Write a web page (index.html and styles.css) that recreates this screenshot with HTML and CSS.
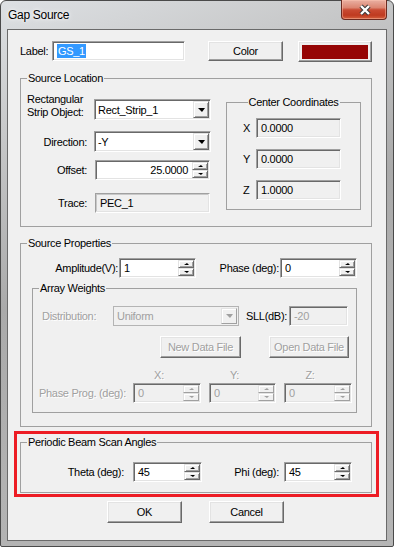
FILE: index.html
```html
<!DOCTYPE html>
<html>
<head>
    <title>Gap Source</title>
    <link rel="stylesheet" href="styles.css">
</head>
<body>
<div class="window">
    <div class="titlebar">
        <span class="title">Gap Source</span>
        <div class="close-btn">
            <svg width="14" height="12" viewBox="0 0 14 12">
                <path d="M3 2 L11 10 M11 2 L3 10" stroke="#3a3a3a" stroke-width="4.4" fill="none"/>
                <path d="M3 2 L11 10 M11 2 L3 10" stroke="#fff" stroke-width="2.4" fill="none"/>
            </svg>
        </div>
    </div>
    <div class="client">
        <div class="label-row">
            <span class="name-cap">Label:</span>
            <div class="edit name-edit"><span class="sel">GS_1</span></div>
            <div class="btn color-btn">Color</div>
            <div class="swatch"><div class="swatch-fill"></div></div>
        </div>

        <fieldset class="group loc-group">
            <legend>Source Location</legend>
            <div class="loc-body">
                <div class="loc-left">
                    <div class="strip-row">
                        <span class="two-line">Rectangular<br>Strip Object:</span>
                        <div class="edit combo strip-combo"><span class="val">Rect_Strip_1</span><span class="drop"><i class="tri-down"></i></span></div>
                    </div>
                    <div class="row dir-row">
                        <span class="cap loc-cap">Direction:</span>
                        <div class="edit combo dir-combo"><span class="val">-Y</span><span class="drop"><i class="tri-down"></i></span></div>
                    </div>
                    <div class="row offset-row">
                        <span class="cap loc-cap">Offset:</span>
                        <div class="edit spin offset-spin"><span class="val right">25.0000</span><span class="arrows"><span><i class="tri-up"></i></span><span><i class="tri-dn"></i></span></span></div>
                    </div>
                    <div class="row trace-row">
                        <span class="cap loc-cap">Trace:</span>
                        <div class="edit flat trace-edit"><span class="val">PEC_1</span></div>
                    </div>
                </div>
                <fieldset class="group center-group">
                    <legend>Center Coordinates</legend>
                    <div class="row coord-row"><span class="axis">X</span><div class="edit ro coord">0.0000</div></div>
                    <div class="row coord-row"><span class="axis">Y</span><div class="edit ro coord">0.0000</div></div>
                    <div class="row coord-row"><span class="axis">Z</span><div class="edit ro coord">1.0000</div></div>
                </fieldset>
            </div>
        </fieldset>

        <fieldset class="group props-group">
            <legend>Source Properties</legend>
            <div class="row amp-row">
                <span class="cap amp-cap">Amplitude(V):</span>
                <div class="edit spin amp-spin"><span class="val">1</span><span class="arrows"><span><i class="tri-up"></i></span><span><i class="tri-dn"></i></span></span></div>
                <span class="cap phase-cap">Phase (deg):</span>
                <div class="edit spin phase-spin"><span class="val">0</span><span class="arrows"><span><i class="tri-up"></i></span><span><i class="tri-dn"></i></span></span></div>
            </div>

            <fieldset class="group array-group">
                <legend>Array Weights</legend>
                <div class="row dist-row">
                    <span class="dim dist-cap">Distribution:</span>
                    <div class="edit combo dis dist-combo"><span class="val">Uniform</span><span class="drop"><i class="tri-down"></i></span></div>
                    <span class="sll-cap">SLL(dB):</span>
                    <div class="edit dis sll-edit"><span class="val">-20</span></div>
                </div>
                <div class="file-row">
                    <div class="btn dis new-btn">New Data File</div>
                    <div class="btn dis open-btn">Open Data File</div>
                </div>
                <div class="axis-row">
                    <span class="dim axis-lbl w68">X:</span>
                    <span class="dim axis-lbl w67">Y:</span>
                    <span class="dim axis-lbl w68">Z:</span>
                </div>
                <div class="row pp-row">
                    <span class="dim pp-cap">Phase Prog. (deg):</span>
                    <div class="edit spin dis w68"><span class="val">0</span><span class="arrows"><span><i class="tri-up"></i></span><span><i class="tri-dn"></i></span></span></div>
                    <div class="edit spin dis w67"><span class="val">0</span><span class="arrows"><span><i class="tri-up"></i></span><span><i class="tri-dn"></i></span></span></div>
                    <div class="edit spin dis w68"><span class="val">0</span><span class="arrows"><span><i class="tri-up"></i></span><span><i class="tri-dn"></i></span></span></div>
                </div>
            </fieldset>
        </fieldset>

        <div class="scan-wrap">
            <fieldset class="group scan-group">
                <legend>Periodic Beam Scan Angles</legend>
                <div class="row scan-row">
                    <span class="cap theta-cap">Theta (deg):</span>
                    <div class="edit spin theta-spin"><span class="val">45</span><span class="arrows"><span><i class="tri-up"></i></span><span><i class="tri-dn"></i></span></span></div>
                    <span class="cap phi-cap">Phi (deg):</span>
                    <div class="edit spin phi-spin"><span class="val">45</span><span class="arrows"><span><i class="tri-up"></i></span><span><i class="tri-dn"></i></span></span></div>
                </div>
            </fieldset>
        </div>

        <div class="footer">
            <div class="btn ok-btn">OK</div>
            <div class="btn cancel-btn">Cancel</div>
        </div>
    </div>
</div>
</body>
</html>
```

FILE: styles.css
```css
* {
    box-sizing: border-box;
}

body {
    margin: 0;
    font-family: "Liberation Sans", Arial, sans-serif;
    font-size: 11px;
    letter-spacing: -0.3px;
    color: #000;
    background: #fff;
}

.window {
    width: 394px;
    height: 547px;
    border: 1px solid #4a4a4a;
    border-radius: 6px 6px 2px 2px;
    padding: 0 6px 5px 6px;
    background: linear-gradient(160deg, #dde0e3 0%, #c9cacb 18%, #aaaaaa 45%, #b2b2b2 70%, #b5b5b5 100%);
}

.titlebar {
    height: 28px;
    display: flex;
    justify-content: space-between;
    align-items: flex-start;
}

.title {
    padding: 6px 0 0 1px;
    line-height: 16px;
    font-size: 12px;
    text-shadow: 0 0 6px rgba(255, 255, 255, 0.9), 0 0 3px rgba(255, 255, 255, 0.9);
}

.close-btn {
    width: 46px;
    height: 20px;
    margin-top: -1px;
    border: 1px solid #6b2a20;
    border-top: none;
    border-radius: 0 0 4px 4px;
    background: linear-gradient(#eab0a2 0%, #dc8672 40%, #c94a32 52%, #bf3a20 80%, #d4603e 100%);
    box-shadow: inset 0 0 0 1px rgba(255, 200, 180, 0.45);
    display: flex;
    align-items: center;
    justify-content: center;
    padding-left: 2px;
}

.client {
    height: 512px;
    border: 1px solid #6a6a6a;
    background: #f0f0f0;
}

.row {
    display: flex;
    align-items: center;
}

.cap {
    text-align: right;
    white-space: nowrap;
}

.dim {
    color: #a0a0a0;
    text-shadow: 1px 1px 0 #fff;
    white-space: nowrap;
}

/* controls */
.edit {
    height: 20px;
    border: 1px solid;
    border-color: #a0a0a0 #fff #fff #a0a0a0;
    box-shadow: inset 1px 1px 0 #696969, inset -1px -1px 0 #e3e3e3;
    background: #fff;
    display: flex;
    align-items: center;
    padding: 1px 1px 1px 4px;
    white-space: nowrap;
    overflow: hidden;
}

.edit.ro {
    background: #f0f0f0;
}

.edit.flat {
    background: #f0f0f0;
    border-color: #a0a0a0 #fff #fff #a0a0a0;
    box-shadow: inset -1px -1px 0 #e3e3e3, inset 1px 1px 0 #c8c8c8;
}

.edit.dis {
    background: #f0f0f0;
    color: #a0a0a0;
}

.val {
    flex: 1;
}

.val.right {
    text-align: right;
    padding-right: 4px;
}

.combo {
    height: 21px;
    padding-left: 3px;
}

.drop {
    width: 16px;
    align-self: stretch;
    border: 1px solid;
    border-color: #e3e3e3 #696969 #696969 #e3e3e3;
    box-shadow: inset 1px 1px 0 #fff, inset -1px -1px 0 #a0a0a0;
    background: #f0f0f0;
    display: flex;
    align-items: center;
    justify-content: center;
}

.tri-down {
    width: 0;
    height: 0;
    border-left: 4px solid transparent;
    border-right: 3px solid transparent;
    border-top: 4px solid #000;
}

.arrows {
    width: 16px;
    align-self: stretch;
    display: flex;
    flex-direction: column;
}

.arrows span {
    flex: 1;
    border: 1px solid;
    border-color: #e3e3e3 #696969 #696969 #e3e3e3;
    box-shadow: inset 1px 1px 0 #fff, inset -1px -1px 0 #a0a0a0;
    background: #f0f0f0;
    display: flex;
    align-items: center;
    justify-content: center;
}

.tri-up {
    width: 0;
    height: 0;
    border-left: 3px solid transparent;
    border-right: 2px solid transparent;
    border-bottom: 2px solid #000;
}

.tri-dn {
    width: 0;
    height: 0;
    border-left: 3px solid transparent;
    border-right: 2px solid transparent;
    border-top: 2px solid #000;
}

.dis .tri-down {
    border-top-color: #a0a0a0;
}

.dis .tri-up {
    border-bottom-color: #a0a0a0;
}

.dis .tri-dn {
    border-top-color: #a0a0a0;
}

.dis .drop,
.dis .arrows span {
    border-color: #e3e3e3 #a0a0a0 #a0a0a0 #e3e3e3;
    box-shadow: inset 1px 1px 0 #fff;
}

.combo.dis {
    border-color: #b4b4b4;
    box-shadow: none;
}

.btn {
    height: 22px;
    border: 1px solid;
    border-color: #fff #696969 #696969 #fff;
    box-shadow: inset -1px -1px 0 #a0a0a0, inset 1px 1px 0 #e3e3e3;
    background: #f0f0f0;
    display: flex;
    align-items: center;
    justify-content: center;
    white-space: nowrap;
}

.btn.dis {
    color: #a0a0a0;
    text-shadow: 1px 1px 0 #fff;
}

/* group boxes */
fieldset.group {
    margin: 0;
    padding: 0;
    min-width: 0;
    border: 1px solid #a0a0a0;
}

fieldset.group legend {
    padding: 0 1px;
    margin-left: 6px;
    line-height: 13px;
}

/* label row */
.label-row {
    display: flex;
    align-items: flex-start;
    margin: 11px 0 0 12px;
}

.name-cap {
    width: 32px;
    line-height: 20px;
}

.name-edit {
    width: 133px;
    padding-left: 4px;
}

.sel {
    background: #3399ff;
    color: #fff;
    line-height: 14px;
    padding: 0 1px;
}

.color-btn {
    margin-left: 23px;
    width: 75px;
    height: 20px;
}

.swatch {
    margin-left: 15px;
    width: 74px;
    height: 21px;
    border: 1px solid;
    border-color: #fff #696969 #696969 #fff;
    box-shadow: inset -1px -1px 0 #a0a0a0, inset 1px 1px 0 #e3e3e3;
    padding: 3px 3px 2px 3px;
    background: #f0f0f0;
}

.swatch-fill {
    height: 100%;
    background: #960606;
}

/* source location */
fieldset.loc-group {
    margin: 10px 0 0 12px;
    width: 352px;
}

.loc-body {
    display: flex;
    align-items: flex-start;
    padding: 0 0 13px 6px;
}

.loc-left {
    width: 184px;
}

.strip-row {
    display: flex;
    align-items: flex-start;
    margin-top: 8px;
}

.two-line {
    width: 60px;
    line-height: 13px;
    white-space: nowrap;
}

.strip-combo {
    margin: 6px 0 0 7px;
    width: 117px;
}

.loc-cap {
    width: 60px;
}

.dir-row {
    margin-top: 11px;
}

.dir-combo {
    margin-left: 7px;
    width: 117px;
}

.offset-row {
    margin-top: 8px;
}

.offset-spin {
    margin-left: 8px;
    width: 115px;
}

.trace-row {
    margin-top: 13px;
}

.trace-edit {
    margin-left: 8px;
    width: 115px;
}

fieldset.center-group {
    margin: 11px 0 0 15px;
    width: 135px;
    padding-bottom: 9px;
}

fieldset.center-group legend {
    margin: 0 auto;
}

.coord-row {
    padding-left: 16px;
    margin-top: 9px;
}

.coord-row + .coord-row {
    margin-top: 11px;
}

.axis {
    width: 13px;
}

.coord {
    width: 85px;
}

/* source properties */
fieldset.props-group {
    margin: 10px 0 0 12px;
    width: 352px;
    padding-bottom: 13px;
}

.amp-row {
    margin-top: 8px;
}

.amp-cap {
    width: 97px;
}

.amp-spin {
    margin-left: 1px;
    width: 77px;
}

.phase-cap {
    width: 83px;
}

.phase-spin {
    margin-left: 1px;
    width: 77px;
}

fieldset.array-group {
    margin: 4px 0 0 11px;
    width: 325px;
    padding-bottom: 9px;
}

.dist-row {
    margin-top: 11px;
    padding-left: 9px;
}

.dist-cap {
    width: 71px;
}

.dist-combo {
    width: 126px;
    height: 20px;
}

.sll-cap {
    margin-left: 7px;
    width: 43px;
}

.sll-edit {
    width: 59px;
}

.file-row {
    display: flex;
    margin-top: 10px;
    padding-left: 127px;
}

.new-btn {
    width: 81px;
}

.open-btn {
    margin-left: 28px;
    width: 80px;
}

.axis-row {
    display: flex;
    margin-top: 11px;
    padding-left: 100px;
    line-height: 13px;
}

.axis-lbl {
    text-align: center;
    padding-right: 16px;
}

.w68 {
    width: 68px;
}

.w67 {
    width: 67px;
}

.axis-row .w67,
.axis-row .w67 + .w68,
.pp-row .w67,
.pp-row .w67 + .w68 {
    margin-left: 8px;
}

.pp-row {
    margin-top: 1px;
    padding-left: 6px;
}

.pp-cap {
    width: 94px;
}

/* scan angles */
.scan-wrap {
    margin: 4px 0 0 6px;
    width: 365px;
    border: 3px solid #ed1c24;
    padding: 2px 4px 1px 3px;
}

fieldset.scan-group {
    width: 352px;
    padding-bottom: 10px;
}

.scan-row {
    margin-top: 13px;
}

.theta-cap {
    width: 103px;
}

.theta-spin {
    margin-left: 9px;
    width: 69px;
}

.phi-cap {
    width: 77px;
}

.phi-spin {
    margin-left: 5px;
    width: 68px;
}

/* footer */
.footer {
    display: flex;
    margin-top: 4px;
    padding-left: 99px;
}

.ok-btn {
    width: 75px;
}

.cancel-btn {
    margin-left: 27px;
    width: 75px;
}
```
